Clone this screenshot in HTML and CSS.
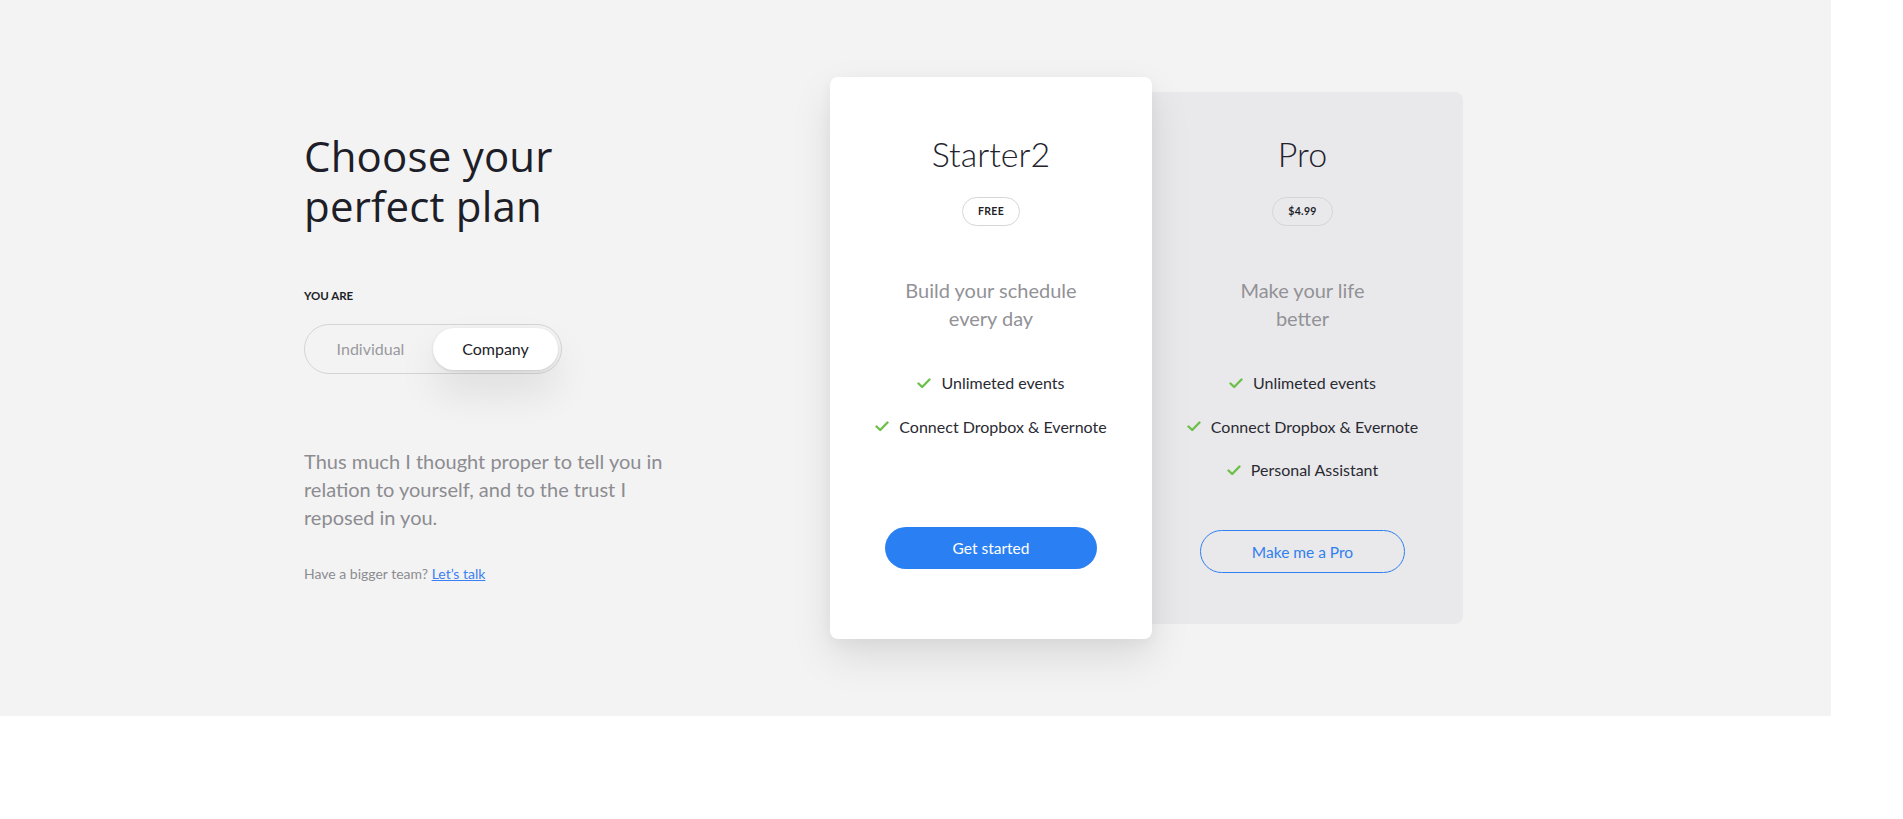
FILE: index.html
```html
<!DOCTYPE html>
<html lang="en">
<head>
<meta charset="utf-8">
<title>Choose your perfect plan</title>
<link rel="stylesheet" href="styles.css">
</head>
<body>
<section class="pricing">
  <div class="intro">
    <h1 class="intro__title">Choose your<br>perfect plan</h1>
    <div class="intro__label">YOU ARE</div>
    <div class="toggle">
      <span class="toggle__opt">Individual</span>
      <span class="toggle__opt toggle__opt--active">Company</span>
    </div>
    <p class="intro__text">Thus much I thought proper to tell you in relation to yourself, and to the trust I reposed in you.</p>
    <p class="intro__note">Have a bigger team? <a class="intro__link" href="#">Let’s talk</a></p>
  </div>
  <div class="plans">
    <div class="plan plan--featured">
      <h2 class="plan__name">Starter2</h2>
      <span class="plan__badge">FREE</span>
      <p class="plan__desc">Build your schedule every day</p>
      <ul class="plan__features">
        <li class="plan__feature"><svg class="check" viewBox="0 0 14 11" width="14" height="11"><path d="M1.5 5.5 L5.2 9 L12.5 1.5" fill="none" stroke="#6cc04a" stroke-width="2.4" stroke-linecap="round" stroke-linejoin="round"/></svg>Unlimeted events</li>
        <li class="plan__feature"><svg class="check" viewBox="0 0 14 11" width="14" height="11"><path d="M1.5 5.5 L5.2 9 L12.5 1.5" fill="none" stroke="#6cc04a" stroke-width="2.4" stroke-linecap="round" stroke-linejoin="round"/></svg>Connect Dropbox &amp; Evernote</li>
      </ul>
      <a class="btn btn--primary" href="#">Get started</a>
    </div>
    <div class="plan plan--pro">
      <h2 class="plan__name">Pro</h2>
      <span class="plan__badge">$4.99</span>
      <p class="plan__desc">Make your life better</p>
      <ul class="plan__features">
        <li class="plan__feature"><svg class="check" viewBox="0 0 14 11" width="14" height="11"><path d="M1.5 5.5 L5.2 9 L12.5 1.5" fill="none" stroke="#6cc04a" stroke-width="2.4" stroke-linecap="round" stroke-linejoin="round"/></svg>Unlimeted events</li>
        <li class="plan__feature"><svg class="check" viewBox="0 0 14 11" width="14" height="11"><path d="M1.5 5.5 L5.2 9 L12.5 1.5" fill="none" stroke="#6cc04a" stroke-width="2.4" stroke-linecap="round" stroke-linejoin="round"/></svg>Connect Dropbox &amp; Evernote</li>
        <li class="plan__feature"><svg class="check" viewBox="0 0 14 11" width="14" height="11"><path d="M1.5 5.5 L5.2 9 L12.5 1.5" fill="none" stroke="#6cc04a" stroke-width="2.4" stroke-linecap="round" stroke-linejoin="round"/></svg>Personal Assistant</li>
      </ul>
      <a class="btn btn--outline" href="#">Make me a Pro</a>
    </div>
  </div>
</section>
</body>
</html>
```

FILE: styles.css
```css
html, body {
  margin: 0;
  padding: 0;
  background: #ffffff;
  font-family: "Lato", "Liberation Sans", sans-serif;
}

.pricing {
  width: 1831px;
  height: 716px;
  box-sizing: border-box;
  background: #f3f3f3;
  display: flex;
  align-items: flex-start;
  padding-left: 304px;
}

.intro {
  width: 526px;
  padding-top: 131px;
}

.intro__title {
  margin: 0;
  font-family: "Open Sans", "Noto Sans", sans-serif;
  font-weight: 400;
  font-size: 42px;
  line-height: 50px;
  color: #1e1e28;
  letter-spacing: 0.2px;
}

.intro__label {
  margin-top: 57px;
  font-size: 11.5px;
  line-height: 16px;
  font-weight: 700;
  color: #1e1e28;
}

.toggle {
  margin-top: 20px;
  display: inline-flex;
  padding: 3px;
  border: 1px solid #d4d4d6;
  border-radius: 26px;
}

.toggle__opt {
  width: 125px;
  height: 42px;
  line-height: 42px;
  text-align: center;
  font-size: 16px;
  color: #9a9a9e;
  border-radius: 21px;
}

.toggle__opt--active {
  background: #ffffff;
  color: #222228;
  box-shadow: 0 1px 3px rgba(0, 0, 0, 0.12), 0 22px 40px rgba(0, 0, 0, 0.09);
}

.intro__text {
  margin: 73px 0 0;
  width: 362px;
  font-size: 20px;
  line-height: 28px;
  color: #8c8c91;
}

.intro__note {
  margin: 33px 0 0;
  font-size: 14px;
  line-height: 20px;
  color: #8c8c91;
}

.intro__link {
  color: #3a80f2;
  text-decoration: underline;
}

.plans {
  display: flex;
  align-items: flex-start;
  margin-top: 77px;
}

.plan {
  display: flex;
  flex-direction: column;
  align-items: center;
  box-sizing: border-box;
  border-radius: 8px;
  text-align: center;
}

.plan--featured {
  position: relative;
  z-index: 1;
  width: 322px;
  height: 562px;
  padding: 57px 0 70px;
  background: #ffffff;
  box-shadow: 0 18px 40px rgba(0, 0, 0, 0.1), 0 4px 14px rgba(0, 0, 0, 0.04);
}

.plan--pro {
  width: 321px;
  height: 532px;
  margin-top: 15px;
  margin-left: -10px;
  padding: 42px 0 51px;
  background: #e9e9eb;
}

.plan__name {
  margin: 0;
  font-weight: 300;
  font-size: 34px;
  line-height: 40px;
  color: #23232d;
}

.plan__badge {
  margin-top: 23px;
  box-sizing: border-box;
  height: 29px;
  padding: 0 15px;
  border: 1px solid #d6d6d8;
  border-radius: 15px;
  font-size: 10.5px;
  line-height: 27px;
  font-weight: 700;
  color: #1e1e28;
  letter-spacing: 0.3px;
}

.plan__desc {
  margin: 50px 0 0;
  max-width: 174px;
  font-size: 20px;
  line-height: 28px;
  color: #929297;
}

.plan__features {
  margin: 39px 0 0;
  padding: 0;
  list-style: none;
  display: flex;
  flex-direction: column;
  align-items: center;
  gap: 19.5px;
}

.plan__feature {
  display: flex;
  align-items: center;
  gap: 10px;
  font-size: 16px;
  line-height: 24px;
  color: #2a2a33;
}

.check {
  display: block;
  flex: none;
}

.btn {
  margin-top: auto;
  box-sizing: border-box;
  display: flex;
  align-items: center;
  justify-content: center;
  border-radius: 22px;
  font-size: 15.5px;
  text-decoration: none;
}

.btn--primary {
  width: 212px;
  height: 42px;
  background: #2a7ff3;
  color: #ffffff;
}

.btn--outline {
  width: 205px;
  height: 43px;
  border: 1px solid #2f80f2;
  color: #2f7ff0;
  background: transparent;
}
```
